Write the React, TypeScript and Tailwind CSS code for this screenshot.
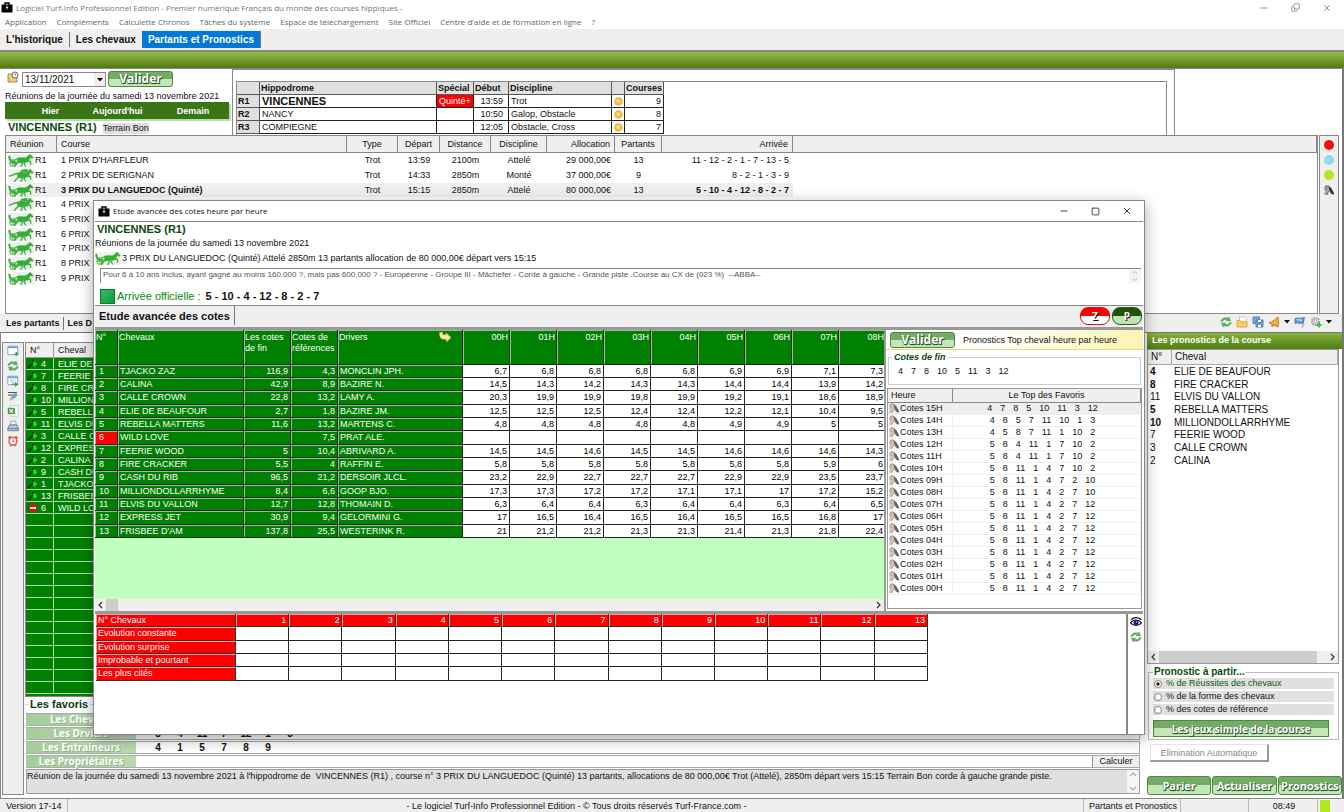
import type { ReactNode } from "react";
import clsx from "clsx";
import { Copy, Minus, Square, X } from "lucide-react";

const MENU = ["Application", "Compléments", "Calculette Chronos", "Tâches du système", "Espace de téléchargement", "Site Officiel", "Centre d'aide et de formation en ligne", "?"];

const MEETINGS = [
  { id: "R1", name: "VINCENNES", special: "Quinté+", start: "13:59", discipline: "Trot", races: 9 },
  { id: "R2", name: "NANCY", special: "", start: "10:50", discipline: "Galop, Obstacle", races: 8 },
  { id: "R3", name: "COMPIEGNE", special: "", start: "12:05", discipline: "Obstacle, Cross", races: 7 },
];

interface Race { name: string; ridden?: boolean; start?: string; distance?: string; kind?: string; purse?: string; runners?: number; finish?: string }

const RACES: Race[] = [
  { name: "1 PRIX D'HARFLEUR", start: "13:59", distance: "2100m", kind: "Attelé", purse: "29 000,00€", runners: 13, finish: "11 - 12 - 2 - 1 - 7 - 13 - 5" },
  { name: "2 PRIX DE SERIGNAN", ridden: true, start: "14:33", distance: "2850m", kind: "Monté", purse: "37 000,00€", runners: 9, finish: "8 - 2 - 1 - 3 - 9" },
  { name: "3 PRIX DU LANGUEDOC (Quinté)", start: "15:15", distance: "2850m", kind: "Attelé", purse: "80 000,00€", runners: 13, finish: "5 - 10 - 4 - 12 - 8 - 2 - 7" },
  { name: "4 PRIX", ridden: true },
  { name: "5 PRIX" },
  { name: "6 PRIX" },
  { name: "7 PRIX" },
  { name: "8 PRIX" },
  { name: "9 PRIX" },
];

const STARTERS: [number, string][] = [
  [4, "ELIE DE BEAUFOUR"], [7, "FEERIE WOOD"], [8, "FIRE CRACKER"], [10, "MILLIONDOLLARRHYME"], [5, "REBELLA MATTERS"],
  [11, "ELVIS DU VALLON"], [3, "CALLE CROWN"], [12, "EXPRESS JET"], [2, "CALINA"], [9, "CASH DU RIB"],
  [1, "TJACKO ZAZ"], [13, "FRISBEE D'AM"], [6, "WILD LOVE"],
];

const HOURS = ["00H", "01H", "02H", "03H", "04H", "05H", "06H", "07H", "08H"];

// horse, closing odds, reference odds, driver, then one value per hour
const ODDS: [string, string, string, string, string][] = [
  ["TJACKO ZAZ", "116,9", "4,3", "MONCLIN JPH.", "6,7 6,8 6,8 6,8 6,8 6,9 6,9 7,1 7,3"],
  ["CALINA", "42,9", "8,9", "BAZIRE N.", "14,5 14,3 14,2 14,3 14,3 14,4 14,4 13,9 14,2"],
  ["CALLE CROWN", "22,8", "13,2", "LAMY A.", "20,3 19,9 19,9 19,8 19,9 19,2 19,1 18,6 18,9"],
  ["ELIE DE BEAUFOUR", "2,7", "1,8", "BAZIRE JM.", "12,5 12,5 12,5 12,4 12,4 12,2 12,1 10,4 9,5"],
  ["REBELLA MATTERS", "11,6", "13,2", "MARTENS C.", "4,8 4,8 4,8 4,8 4,8 4,9 4,9 5 5"],
  ["WILD LOVE", "", "7,5", "PRAT ALE.", ""],
  ["FEERIE WOOD", "5", "10,4", "ABRIVARD A.", "14,5 14,5 14,6 14,5 14,5 14,6 14,6 14,6 14,3"],
  ["FIRE CRACKER", "5,5", "4", "RAFFIN E.", "5,8 5,8 5,8 5,8 5,8 5,8 5,8 5,9 6"],
  ["CASH DU RIB", "96,5", "21,2", "DERSOIR JLCL.", "23,2 22,9 22,7 22,7 22,7 22,9 22,9 23,5 23,7"],
  ["MILLIONDOLLARRHYME", "8,4", "6,6", "GOOP BJO.", "17,3 17,3 17,2 17,2 17,1 17,1 17 17,2 15,2"],
  ["ELVIS DU VALLON", "12,7", "12,8", "THOMAIN D.", "6,3 6,4 6,4 6,3 6,4 6,4 6,3 6,4 6,5"],
  ["EXPRESS JET", "30,9", "9,4", "GELORMINI G.", "17 16,5 16,4 16,5 16,4 16,5 16,5 16,8 17"],
  ["FRISBEE D'AM", "137,8", "25,5", "WESTERINK R.", "21 21,2 21,2 21,3 21,3 21,4 21,3 21,8 22,4"],
];

const TOP: [string, string][] = [
  ["15H", "4 7 8 5 10 11 3 12"],
  ["14H", "4 8 5 7 11 10 1 3"],
  ["13H", "4 5 8 7 11 1 10 2"],
  ["12H", "5 8 4 11 1 7 10 2"],
  ["11H", "5 8 4 11 1 7 10 2"],
  ["10H", "5 8 11 1 4 7 10 2"],
  ["09H", "5 8 11 1 4 7 2 10"],
  ["08H", "5 8 11 1 4 2 7 10"],
  ["07H", "5 8 11 1 4 2 7 12"],
  ["06H", "5 8 11 1 4 2 7 12"],
  ["05H", "5 8 11 1 4 2 7 12"],
  ["04H", "5 8 11 1 4 2 7 12"],
  ["03H", "5 8 11 1 4 2 7 12"],
  ["02H", "5 8 11 1 4 2 7 12"],
  ["01H", "5 8 11 1 4 2 7 12"],
  ["00H", "5 8 11 1 4 2 7 12"],
];

const PICKS: [number, string, boolean][] = [
  [4, "ELIE DE BEAUFOUR", true], [8, "FIRE CRACKER", true], [11, "ELVIS DU VALLON", false], [5, "REBELLA MATTERS", true],
  [10, "MILLIONDOLLARRHYME", true], [7, "FEERIE WOOD", false], [3, "CALLE CROWN", false], [2, "CALINA", false],
];

const FAVOURITES: [string, string][] = [
  ["Les Chevaux", ""],
  ["Les Drviers", "8 4 11 7 12 1 3"],
  ["Les Entraineurs", "4 1 5 7 8 9"],
  ["Les Propriétaires", ""],
];

const TRENDS = ["Evolution constante", "Evolution surprise", "Improbable et pourtant", "Les plus cités"];

/* ---------- icons ---------- */

function Briefcase() {
  return (
    <svg viewBox="0 0 12 11" className="h-[11px] w-3 shrink-0" aria-hidden="true">
      <path d="M4 3V1h4v2" fill="none" stroke="#000" strokeWidth="1.400" />
      <path d="M.5 2.500h11v8H.5z" fill="#000" />
      <path d="M6 3.500v4M4.800 5.500h2.400" stroke="#ddd" strokeWidth=".9" />
    </svg>
  );
}

function Horse({ ridden = false }: { ridden?: boolean }) {
  return (
    <svg viewBox="0 0 52 26" className="h-[13px] w-[26px] shrink-0 bg-[#f0f0f0]" fill="none" stroke="#35b035" strokeLinecap="round" strokeLinejoin="round" aria-hidden="true">
      <path d="M20 8c4-2 11 0 16-1l6-5 3-2 1 2.500 5 4.500-2 2-4.500-1.500c-1.500 4-3.500 7.500-6.500 9-5 1-9 0-13 1.500l-4-.5c-3-3-3.500-7.500-1-9.500z" fill="#35b035" strokeWidth=".5" />
      <path d="M22 15l-5 5-4 5M25 15l4 4-3 6M37 14l8 1 .5 5.500M35 15l-3 4 3 5" strokeWidth="2.600" />
      {ridden
        ? (
          <>
            <path d="M20 9c-6-1-8 4-17 5" strokeWidth="3" />
            <path d="M25 8l3-5 6-1 3 3M30 7l5-3" strokeWidth="3.400" />
            <circle cx="37" cy="1.800" r="1.600" fill="#35b035" />
          </>
        )
        : (
          <>
            <circle cx="9" cy="19" r="5.500" strokeWidth="1.800" />
            <path d="M9 13.500v11M3.500 19h11M4 15.500l10 7" strokeWidth=".9" />
            <path d="M9 18l12-3M20 9c-3 0-4 3-7 5" strokeWidth="2" />
            <path d="M3 9l3 6 7 .5 3 3" strokeWidth="3.600" />
            <path d="M5 11l7 1 9-3" strokeWidth="1.600" />
            <circle cx="2.800" cy="6" r="1.800" fill="#35b035" />
          </>
        )}
    </svg>
  );
}

function Sun() {
  return (
    <svg viewBox="0 0 9 9" className="mx-auto h-[9px] w-[9px]" aria-hidden="true">
      <circle cx="4.500" cy="4.500" r="3.700" fill="#f5c644" stroke="#e0a62c" strokeWidth="1.200" strokeDasharray="1 .6" />
      <circle cx="4" cy="4" r="1.600" fill="#fde08a" />
    </svg>
  );
}

function Refresh() {
  return (
    <svg viewBox="0 0 12 12" className="h-3 w-3" fill="#5cb85c" stroke="#3a8a3a" strokeWidth=".4" aria-hidden="true">
      <path d="M.8 5.500C1.500 2.500 4.500 1 8 2.200L9 1l1.500 4-4.300-.2 1-1.100C5 3 3.200 3.700 2.600 5.300z" />
      <path d="M11.200 6.500c-.7 3-3.700 4.500-7.200 3.300L3 11 1.500 7l4.300.2-1 1.100c2.200.7 4 0 4.600-1.600z" />
    </svg>
  );
}

function HorseHead({ muted = false }: { muted?: boolean }) {
  return (
    <svg viewBox="0 0 12 12" className="h-[11px] w-[12px] shrink-0" aria-hidden="true">
      <path d="M.5 3 2.500.8 6 1l2.500 3 3 4.500-1 2L7.500 9 5.800 7 4.800 8.500 3.500 11H.5L1.500 7z" fill={muted ? "#cdc3b8" : "#a8a8a8"} />
      <path d="M5.800 1 8.500 3.500l3 5.500-.8 1.500-2-1L6.500 6 6 4z" fill={muted ? "#6e6054" : "#333"} />
      <path d="M1 2.500 3 1l3 .3M1.800 5.500l2-2M3.500 11l2-4" fill="none" stroke={muted ? "#8d7f72" : "#333"} strokeWidth=".8" />
    </svg>
  );
}

// "table" sheet icons of the left toolbar share the same frame
function Sheet({ children }: { children?: ReactNode }) {
  return (
    <svg viewBox="0 0 12 12" className="h-3 w-3" aria-hidden="true">
      <rect x=".8" y="1.200" width="10" height="8.500" rx=".6" fill="#fff" stroke="#7fa6d6" />
      <path d="M1 2.400h9.600" stroke="#6d9bd4" strokeWidth="1.600" />
      {children}
    </svg>
  );
}

function Printer() {
  return (
    <svg viewBox="0 0 12 12" className="h-3 w-3" aria-hidden="true">
      <path d="M3 5 4 1h4.500L9.500 5z" fill="#e9f1fb" stroke="#7b8fab" strokeWidth=".7" />
      <path d="M.8 8.500 2.500 5h7.500l1.300 3.500v2.200H.8z" fill="#b8c9e2" stroke="#566b8a" strokeWidth=".8" />
      <path d="M1 8.500h10" stroke="#566b8a" strokeWidth=".8" />
    </svg>
  );
}

function Flag({ withdrawn = false }: { withdrawn?: boolean }) {
  if (withdrawn) {
    return (
      <svg viewBox="0 0 12 10" className="h-[10px] w-3" aria-hidden="true">
        <circle cx="6" cy="5" r="4.200" fill="#e80f0f" />
        <path d="M3 5h6" stroke="#fff" strokeWidth="1.800" />
      </svg>
    );
  }
  return (
    <svg viewBox="0 0 12 10" className="h-[10px] w-3" aria-hidden="true">
      <path d="M.8 9.200 6 3.800M5.500 1l5 6" stroke="#021a02" strokeWidth="1.200" />
      <path d="M6 3.500l1.800-2L9 4l1.600.8-1.400 2.400-2.800.2z" fill="#25d425" />
    </svg>
  );
}

function Excel() {
  return (
    <svg viewBox="0 0 12 12" className="h-3 w-3" aria-hidden="true">
      <rect x="3" y=".8" width="8" height="10.400" fill="#fff" stroke="#b5c4ae" strokeWidth=".7" />
      <rect x=".8" y="2.800" width="7" height="6.200" fill="#4f9a4a" />
      <path d="M2.500 4.200l3.500 3.400M6 4.200 2.500 7.600" stroke="#fff" strokeWidth="1.100" />
    </svg>
  );
}

function Brush() {
  return (
    <svg viewBox="0 0 12 12" className="h-3 w-3" aria-hidden="true">
      <path d="M1 2.500h9M1 5h6" stroke="#555" strokeWidth="1" />
      <path d="M3 8.500 8 2.800l3 1.600-3.500 4z" fill="#6fa3d8" />
      <path d="M2.500 11 3 8l3.500 1.200z" fill="#f0a53a" />
    </svg>
  );
}

function AlarmClock() {
  return (
    <svg viewBox="0 0 12 12" className="h-3 w-3" aria-hidden="true">
      <path d="M1.500 3.500 3.600 1.400M10.500 3.500 8.400 1.400M3 10.800l1-1M9 10.800l-1-1" stroke="#e0574b" strokeWidth="1.900" />
      <circle cx="6" cy="6.300" r="3.900" fill="#fff" stroke="#ea6a5c" strokeWidth="1.800" />
      <path d="M6 4.200v2.300h1.800" fill="none" stroke="#555" strokeWidth=".8" />
    </svg>
  );
}

function Eye() {
  return (
    <svg viewBox="0 0 12 12" className="h-3 w-3" aria-hidden="true">
      <path d="M.5 6.800C3 3.200 8.500 3 11.500 6.800 8.500 10.300 3.500 10.300.5 6.800z" fill="#fff" stroke="#111" strokeWidth="1.200" />
      <circle cx="6" cy="6.600" r="2.500" fill="#16168c" />
      <circle cx="6.500" cy="5.900" r=".7" fill="#cfd6ff" />
      <path d="M1 3.500C4 .8 8.500 1 11.300 3.800" fill="none" stroke="#111" strokeWidth="1.300" />
    </svg>
  );
}

function Folder() {
  return (
    <svg viewBox="0 0 12 12" className="h-3 w-3" aria-hidden="true">
      <path d="M3.500 1h5L10 2.500V8H3.500z" fill="#fff" stroke="#aaa" strokeWidth=".6" />
      <path d="M1 4.500h3l1 1.300h6v5.200H1z" fill="#f8cf6a" stroke="#d99a2b" strokeWidth=".8" />
    </svg>
  );
}

function SaveAll() {
  return (
    <svg viewBox="0 0 12 12" className="h-3 w-3" fill="#7fa9df" stroke="#3e6db0" strokeWidth=".8" aria-hidden="true">
      <path d="M1 1h6.500v6.500H1z" />
      <path d="M4 4h7v7H4z" />
      <path d="M5.500 4v2.500h4V4M5.500 11V8.300h4V11" fill="#fff" />
    </svg>
  );
}

function Bell() {
  return (
    <svg viewBox="0 0 12 12" className="h-3 w-3" aria-hidden="true">
      <path d="M9.800.8c1 3 .8 6.500.2 10.200L1 6.800C4.500 5.500 7.500 4 9.800.8z" fill="#f2b03f" stroke="#a8701a" strokeWidth=".8" />
      <path d="M3.500 8.200 3 10.500l2 .3.800-1.500" fill="#c98b25" />
    </svg>
  );
}

function BlueFlag() {
  return (
    <svg viewBox="0 0 12 12" className="h-3 w-3" aria-hidden="true">
      <path d="M10.500 1 8.500 11.500" stroke="#c8843a" strokeWidth="1" />
      <path d="M1 2.500c3-1.300 5 .8 9-1L9 7C6 8.300 4 6 1 7.500z" fill="#5b9fe0" stroke="#3272b5" strokeWidth=".7" />
      <path d="M2.500 3.800c2-.4 3.500.7 5.500.2" stroke="#cfe5fb" strokeWidth="1.200" fill="none" />
    </svg>
  );
}

function Gear() {
  return (
    <svg viewBox="0 0 12 12" className="h-3 w-3" aria-hidden="true">
      <circle cx="5.500" cy="5.500" r="3.600" fill="#ddd" stroke="#999" strokeWidth="1.900" strokeDasharray="1.500 .9" />
      <circle cx="5.500" cy="5.500" r="1.400" fill="#fff" stroke="#888" strokeWidth=".6" />
      <path d="M9 6.500v5M6.500 9h5" stroke="#4fae45" strokeWidth="1.800" />
    </svg>
  );
}

function Caret() {
  return (
    <svg viewBox="0 0 6 4" className="h-1 w-[6px]" aria-hidden="true"><path d="M0 0h6L3 3.500z" fill="#111" /></svg>
  );
}

function Chevron({ to }: { to: "left" | "right" | "up" | "down" }) {
  const d = { left: "M5 1 2 4l3 3", right: "M3 1l3 3-3 3", up: "M1 5l3-3 3 3", down: "M1 3l3 3 3-3" }[to];
  return (
    <svg viewBox="0 0 8 8" className="h-2 w-2" aria-hidden="true">
      <path d={d} fill="none" stroke={to === "up" || to === "down" ? "#aaa" : "#333"} strokeWidth="1.200" />
    </svg>
  );
}

function IconButton({ label, children }: { label: string; children: ReactNode }) {
  return <button type="button" aria-label={label} className="flex shrink-0 items-center justify-center">{children}</button>;
}

/* ---------- shared controls ---------- */

function GreenButton({ children, className = "" }: { children: ReactNode; className?: string }) {
  return (
    <button
      type="button"
      className={clsx(
        "flex items-center justify-center border border-[#4a8a3c] bg-linear-to-b from-[#74ab66] from-50% to-[#c4e6b8] to-50% font-['Open_Sans',sans-serif] font-bold whitespace-nowrap text-white [text-shadow:1px_1px_0_#24501a,0_1px_1px_#24501a]",
        className,
      )}
    >
      {children}
    </button>
  );
}

function HorizontalBar({ thumb }: { thumb: string }) {
  return (
    <div className="flex h-3 shrink-0 items-center bg-[#efefef] px-[2px]">
      <Chevron to="left" />
      <div className="flex h-full flex-1 px-[1px]"><div className={clsx("h-full bg-[#cdcdcd]", thumb)} /></div>
      <Chevron to="right" />
    </div>
  );
}

function VerticalArrows() {
  return (
    <div className="flex w-3 shrink-0 flex-col items-center justify-between bg-[#f5f5f5] py-[1px]">
      <Chevron to="up" />
      <Chevron to="down" />
    </div>
  );
}

/* ---------- main window ---------- */

function MeetingPicker() {
  return (
    <div className="w-[232px] shrink-0 pl-[5px]">
      <div className="flex h-[19px] items-center">
        <svg viewBox="0 0 12 12" className="mb-[4px] ml-[2px] h-3 w-3" aria-hidden="true">
          <path d="M1 3h4l1 1h4v7H1z" fill="#e9cd7c" stroke="#8c7434" strokeWidth=".8" />
          <circle cx="8" cy="4" r="3" fill="#fff" stroke="#444" strokeWidth=".8" />
          <path d="M8 2.300V4h1.300" fill="none" stroke="#444" strokeWidth=".7" />
        </svg>
        <div className="relative ml-[3px] mt-[2px] h-[15px] w-[84px] border border-[#888]">
          <select aria-label="Date" className="h-full w-full appearance-none bg-white pl-[2px] text-[10px] leading-[13px]">
            <option>13/11/2021</option>
          </select>
          <span className="pointer-events-none absolute inset-y-0 right-0 flex w-[11px] items-center justify-center bg-[#efefef]"><Caret /></span>
        </div>
        <GreenButton className="ml-[2px] h-[16px] w-[65px] rounded-[3px] text-[12px] leading-[14px]">Valider</GreenButton>
      </div>
      <p className="h-[14px] pt-[2px] text-[9px] leading-[12px] whitespace-nowrap">Réunions de la journée du samedi 13 novembre 2021</p>
      <div className="flex h-[17px] w-[224px] items-center bg-[#3a7518] text-[9px] leading-[12px] font-bold whitespace-nowrap text-white shadow-[2px_2px_0_#b9dcae]">
        <button type="button" className="w-[91px]">Hier</button>
        <button type="button" className="w-[43px]"><span className="-mx-1">Aujourd'hui</span></button>
        <button type="button" className="flex-1 pl-[18px]">Demain</button>
      </div>
      <div className="flex h-[15px] items-end gap-[6px] pl-[3px]">
        <h1 className="text-[11px] leading-[13px] font-bold text-[#0b4a0b]">VINCENNES (R1)</h1>
        <span className="bg-[#e0e0e0] text-[9px] leading-[11px]">Terrain Bon</span>
      </div>
    </div>
  );
}

function MeetingTable() {
  return (
    <div className="w-[943px] border-x border-t border-[#888] pt-[11px] pr-[7px] pl-[3px]">
      <div className="h-[54px] border border-b-0 border-[#888]">
        <table className="w-[427px] table-fixed border-separate border-spacing-0 text-left text-[9px] leading-[11px] [&_td]:h-[13px] [&_td]:border-r [&_td]:border-b [&_td]:border-[#222] [&_td]:px-[2px] [&_th]:h-[13px] [&_th]:border-r [&_th]:border-b [&_th]:border-[#555] [&_th]:bg-[#e0e0e0] [&_th]:px-[1px]">
          <colgroup>
            <col className="w-[23px]" /><col className="w-[177px]" /><col className="w-[37px]" /><col className="w-[35px]" />
            <col className="w-[103px]" /><col className="w-[13px]" /><col />
          </colgroup>
          <thead>
            <tr><th /><th>Hippodrome</th><th>Spécial</th><th>Début</th><th>Discipline</th><th /><th className="text-center">Courses</th></tr>
          </thead>
          <tbody>
            {MEETINGS.map((m) => (
              <tr key={m.id}>
                <th scope="row">{m.id}</th>
                <td className={m.id === "R1" ? "text-[11px] font-bold" : ""}>{m.name}</td>
                <td className={m.special ? "bg-[#fe0000] text-white" : ""}>{m.special}</td>
                <td className="pr-[5px]! text-right">{m.start}</td>
                <td>{m.discipline}</td>
                <td className="px-0!"><Sun /></td>
                <td className="text-right">{m.races}</td>
              </tr>
            ))}
          </tbody>
        </table>
      </div>
    </div>
  );
}

function RaceList() {
  return (
    <div className="flex h-[179px] shrink-0 gap-[1px] border-r-2 border-[#777] pr-[3px] pl-[5px]">
      <div className="flex-1 overflow-hidden border border-[#888]">
        <table className="w-full table-fixed border-separate border-spacing-0 text-center text-[9px] leading-[11px] whitespace-nowrap [&_th]:h-[17px] [&_th]:border-r [&_th]:border-b [&_th]:border-[#888] [&_th]:bg-[#efefef] [&_th]:px-1 [&_th]:font-normal [&_td]:px-1 [&_td]:py-0">
          <colgroup>
            <col className="w-[51px]" /><col className="w-[290px]" /><col className="w-[51px]" /><col className="w-[42px]" /><col className="w-[51px]" />
            <col className="w-[56px]" /><col className="w-[68px]" /><col className="w-[47px]" /><col className="w-[131px]" /><col />
          </colgroup>
          <thead>
            <tr>
              <th className="text-left">Réunion</th><th className="text-left">Course</th><th>Type</th><th>Départ</th><th>Distance</th>
              <th>Discipline</th><th className="text-right">Allocation</th><th>Partants</th><th className="text-right">Arrivée</th><th />
            </tr>
          </thead>
          <tbody className="[&>tr]:h-[15px] [&>tr:nth-child(3n)]:h-[14px]">
            {RACES.map((r, i) => (
              <tr key={r.name} className={clsx(i === 2 && "[&>td:not(:last-child)]:bg-[#efefef]")}>
                <td className="pl-[2px]! text-left"><span className="flex items-center gap-[1px]"><Horse ridden={r.ridden} />R1</span></td>
                <td className={clsx("pl-[4px]! text-left", i === 2 && "font-bold")}>{r.name}</td>
                <td>{r.start && "Trot"}</td>
                <td>{r.start}</td>
                <td>{r.distance}</td>
                <td>{r.kind}</td>
                <td className="text-right">{r.purse}</td>
                <td>{r.runners}</td>
                <td className={clsx("text-right", i === 2 && "font-bold")}>{r.finish}</td>
                <td />
              </tr>
            ))}
          </tbody>
        </table>
      </div>
      <div className="flex w-[20px] flex-col items-center gap-[5px] border border-[#888] bg-[#efefef] pt-[4px]">
        <button type="button" aria-label="Rouge" className="h-[10px] w-[10px] rounded-full bg-[#f01010]" />
        <button type="button" aria-label="Bleu" className="h-[10px] w-[10px] rounded-full bg-[#98d8ea]" />
        <button type="button" aria-label="Vert" className="h-[10px] w-[10px] rounded-full bg-[#b2e61d]" />
        <IconButton label="Cheval"><HorseHead /></IconButton>
      </div>
    </div>
  );
}

function StarterList() {
  return (
    <div className="h-[355px] overflow-hidden border border-[#888] bg-[#008000]">
      <table className="w-full table-fixed border-separate border-spacing-0 text-[9px] leading-[10px]">
        <colgroup><col className="w-[28px]" /><col className="w-[40px]" /><col /></colgroup>
        <thead>
          <tr className="text-left [&>th]:h-[15px] [&>th]:border-r [&>th]:border-b [&>th]:border-[#999] [&>th]:bg-[#efefef] [&>th]:px-1 [&>th]:font-normal">
            <th>N°</th><th>Cheval</th><th />
          </tr>
        </thead>
        <tbody className="text-white [&_td]:h-3 [&_td]:border-r [&_td]:border-b [&_td]:border-[#b5d6b5] [&_td]:p-0">
          {Array.from({ length: 28 }, (_, i) => {
            const starter = STARTERS[i];
            return (
              <tr key={i}>
                <td>{starter && <span className="flex h-[11px] items-center gap-[2px] pl-[1px]"><Flag withdrawn={starter[0] === 6} />{starter[0]}</span>}</td>
                <td className="overflow-hidden pl-[4px]! whitespace-nowrap">{starter?.[1]}</td>
                <td />
              </tr>
            );
          })}
        </tbody>
      </table>
    </div>
  );
}

function Favourites() {
  return (
    <fieldset className="border-t border-[#ccc]">
      <legend className="ml-[3px] px-[2px] text-[11px] leading-[15px] font-bold text-[#0b3a0b]">Les favoris</legend>
      <div className="flex flex-col gap-[1px] pt-[1px] pl-[1px]">
        {FAVOURITES.map(([label, numbers]) => (
          <div key={label} className="flex h-[13px] items-stretch border-y border-r border-[#aaa] bg-white">
            <button type="button" className="w-[110px] shrink-0 bg-linear-to-r from-[#a5cc9b] to-[#b9dcae] font-['Open_Sans',sans-serif] text-[10px] leading-[11px] font-bold text-white [text-shadow:1px_1px_0_#8fb585]">{label}</button>
            <div className="flex flex-1 pl-[11px] text-[10px] leading-[12px] font-bold">
              {numbers.split(" ").map((n, i) => <span key={i} className="w-[22px] text-center">{n}</span>)}
            </div>
            {label === "Les Propriétaires" && (
              <button type="button" className="w-[47px] border-l border-[#999] bg-[#efefef] text-[9px] leading-[11px]">Calculer</button>
            )}
          </div>
        ))}
      </div>
    </fieldset>
  );
}

function PicksPanel() {
  return (
    <aside className="flex w-[197px] shrink-0 flex-col border-r-2 border-[#777]">
      <h2 className="h-[16px] bg-linear-to-b from-[#86b33a] to-[#4f7d12] pl-[5px] text-[9px] leading-[14px] font-bold text-white">Les pronostics de la course</h2>
      <div className="mr-[3px] flex flex-1 flex-col border border-[#999]">
        <table className="w-full table-fixed border-separate border-spacing-0 text-left text-[10px] leading-[12px]">
          <colgroup><col className="w-[24px]" /><col /></colgroup>
          <thead>
            <tr className="[&>th]:h-[15px] [&>th]:border-r [&>th]:border-b [&>th]:border-[#aaa] [&>th]:bg-[#efefef] [&>th]:px-[3px] [&>th]:font-normal"><th>N°</th><th>Cheval</th></tr>
          </thead>
          <tbody className="[&>tr]:h-[13px] [&>tr:nth-child(3n)]:h-[12px]">
            {PICKS.map(([n, name, strong]) => (
              <tr key={n}>
                <td className={clsx("py-0 pr-0 pl-[2px]", strong && "font-bold")}>{n}</td>
                <td className="py-0 pr-0 pl-[2px]">{name}</td>
              </tr>
            ))}
          </tbody>
        </table>
        <div className="flex-1" />
        <HorizontalBar thumb="w-[94%]" />
      </div>
      <fieldset className="mt-[2px] mr-[3px] ml-[1px] border border-[#bbb] px-[4px] pb-[2px]">
        <legend className="px-[1px] text-[10px] leading-[12px] font-bold text-[#0b4a0b]">Pronostic à partir...</legend>
        <div className="flex flex-col gap-[2px]">
          {["% de Réussites des chevaux", "% de la forme des chevaux", "% des cotes de référence"].map((label, i) => (
            <label key={label} className={clsx("flex h-[11px] items-center gap-1 bg-[#e0e0e0] pl-[1px] text-[9px] leading-[11px]", i === 0 && "text-[#0b5a0b]")}>
              <input type="radio" name="basis" defaultChecked={i === 0} className="h-2 w-2 appearance-none rounded-full border border-[#888] bg-white checked:bg-[radial-gradient(#111_35%,#fff_40%)]" />
              {label}
            </label>
          ))}
        </div>
        <GreenButton className="mt-[5px] h-[17px] w-[176px] text-[10px] leading-[14px]">Les jeux simple de la course</GreenButton>
      </fieldset>
      <button type="button" className="mt-[4px] ml-[3px] h-[18px] w-[119px] border border-r-2 border-b-2 border-[#e5e5e5] border-r-[#999] border-b-[#999] bg-white text-[9px] leading-[12px] text-[#888]">Elimination Automatique</button>
      <div className="mt-[14px] mb-[3px] flex gap-[1px]">
        {["Parier", "Actualiser", "Pronostics"].map((label) => (
          <GreenButton key={label} className="h-[19px] flex-1 rounded-[3px] text-[11px] leading-[16px]">{label}</GreenButton>
        ))}
      </div>
    </aside>
  );
}

/* ---------- odds window ---------- */

function OddsTable() {
  return (
    <div className="flex min-w-0 flex-1 flex-col overflow-hidden bg-[#c0ffc0]">
      <div className="flex-1 overflow-hidden">
        <table className="w-[791px] table-fixed border-separate border-spacing-0 text-[9px] leading-[11px] whitespace-nowrap text-white [&_td]:border-r [&_td]:border-b [&_td]:border-[#222] [&_td]:px-[2px] [&_td]:py-0 [&_th]:border-r [&_th]:border-b [&_th]:border-[#222] [&_th]:bg-[#008000] [&_th]:px-[1px] [&_th]:pt-[2px] [&_th]:align-top [&_th]:font-normal [&_th]:shadow-[inset_1px_1px_0_#8fc48f]">
          <colgroup>
            <col className="w-[23px]" /><col className="w-[126px]" /><col className="w-[47px]" /><col className="w-[47px]" /><col className="w-[125px]" />
            {HOURS.map((h) => <col key={h} />)}
          </colgroup>
          <thead>
            <tr className="h-[35px] text-left">
              <th>N°</th>
              <th>Chevaux</th>
              <th className="whitespace-normal">Les cotes de fin</th>
              <th className="whitespace-normal">Cotes de références</th>
              <th>
                <span className="flex items-start justify-between pr-[10px]">
                  Drivers
                  <svg viewBox="0 0 12 10" className="h-[10px] w-3" aria-hidden="true">
                    <path d="M.5.500 3.500 0v2.500L7 3V.8L12 5.500 7.500 10V7.500L3 7C1 6 .5 4 .5.500z" fill="#ffe9a0" stroke="#d9a93a" strokeWidth=".6" />
                  </svg>
                </span>
              </th>
              {HOURS.map((h) => <th key={h} className="text-right">{h}</th>)}
            </tr>
          </thead>
          <tbody className="[&>tr]:h-[13px] [&>tr:nth-child(3n)]:h-[14px]">
            {ODDS.map(([name, last, ref, driver, hours], i) => {
              const values = hours.split(" ");
              return (
                <tr key={name} className="[&>td:nth-child(-n+5)]:bg-[#008000] [&>td:nth-child(-n+5)]:shadow-[inset_1px_1px_0_#8fc48f]">
                  <td className={clsx("pl-1!", i === 5 && "bg-[#fe0000]!")}>{i + 1}</td>
                  <td>{name}</td>
                  <td className="text-right">{last}</td>
                  <td className="text-right">{ref}</td>
                  <td>{driver}</td>
                  {HOURS.map((h, k) => <td key={h} className="bg-white text-right text-black">{values[k]}</td>)}
                </tr>
              );
            })}
          </tbody>
        </table>
      </div>
      <HorizontalBar thumb="w-3" />
    </div>
  );
}

function Numbers({ list, className = "" }: { list: string; className?: string }) {
  return (
    <span className={clsx("flex gap-2", className)}>
      {list.split(" ").map((n, i) => <span key={i}>{n}</span>)}
    </span>
  );
}

function TopPanel() {
  return (
    <div className="flex w-[259px] shrink-0 flex-col border-l-2 border-[#999] bg-white">
      <div className="flex h-[20px] items-center gap-[8px] border-b border-[#f0d870] bg-linear-to-r from-white from-40% to-[#fdf3b0] pl-[4px]">
        <GreenButton className="h-[16px] w-[65px] rounded-[3px] text-[12px] leading-[14px]">Valider</GreenButton>
        <span className="text-[9px] leading-[12px]">Pronostics Top cheval heure par heure</span>
      </div>
      <fieldset className="mx-[2px] mt-[1px] h-[34px] border border-[#ccc]">
        <legend className="ml-[3px] px-[2px] text-[9px] leading-[12px] font-bold text-[#0b4a0b] italic">Cotes de fin</legend>
        <Numbers list="4 7 8 10 5 11 3 12" className="pt-[2px] pl-[9px] text-[9px] leading-[12px]" />
      </fieldset>
      <div className="mx-[1px] mt-[3px] mb-[2px] flex-1 border border-[#999]">
        <table className="w-full table-fixed border-separate border-spacing-0 text-[9px] leading-[11px]">
          <colgroup><col className="w-[65px]" /><col /></colgroup>
          <thead>
            <tr className="[&>th]:h-[14px] [&>th]:border-r [&>th]:border-b [&>th]:border-[#888] [&>th]:bg-[#efefef] [&>th]:px-[3px] [&>th]:font-normal">
              <th className="text-left">Heure</th><th>Le Top des Favoris</th>
            </tr>
          </thead>
          <tbody className="[&_td]:h-3 [&_td]:border-r [&_td]:border-b [&_td]:border-[#f0f0f0] [&_td]:p-0">
            {TOP.map(([hour, list], i) => (
              <tr key={hour} className={i === 0 ? "bg-[#efefef]" : ""}>
                <td><span className="flex h-[11px] items-center whitespace-nowrap"><HorseHead muted />Cotes {hour}</span></td>
                <td><Numbers list={list} className="justify-center pr-2" /></td>
              </tr>
            ))}
          </tbody>
        </table>
      </div>
    </div>
  );
}

function TrendTable() {
  return (
    <table className="w-[832px] table-fixed border-separate border-spacing-0 text-[9px] leading-[11px] text-white [&_td]:border-r [&_td]:border-b [&_td]:border-[#222] [&_td]:p-0 [&_th]:border-r [&_th]:border-b [&_th]:border-[#333] [&_th]:bg-[#fe0000] [&_th]:px-[2px] [&_th]:py-0 [&_th]:font-normal [&_th]:shadow-[inset_1px_1px_0_#ff9c9c]">
      <colgroup><col className="w-[140px]" />{ODDS.map(([name]) => <col key={name} />)}</colgroup>
      <thead>
        <tr className="h-[13px]"><th className="text-left">N° Chevaux</th>{ODDS.map(([name], i) => <th key={name} className="text-right">{i + 1}</th>)}</tr>
      </thead>
      <tbody className="[&>tr]:h-[13px] [&>tr:nth-child(3n+1)]:h-[14px]">
        {TRENDS.map((t) => (
          <tr key={t}><th scope="row" className="text-left">{t}</th>{ODDS.map(([name]) => <td key={name} className="bg-white" />)}</tr>
        ))}
      </tbody>
    </table>
  );
}

function OddsWindow() {
  return (
    <section className="absolute top-[200px] right-[199px] left-[93px] flex h-[535px] flex-col border border-[#888] bg-white px-[1px] shadow-[0_4px_14px_rgba(0,0,0,0.35)]">
      <header className="flex h-[20px] shrink-0 items-center gap-[3px] pl-[3px]">
        <Briefcase />
        <h2 className="flex-1 font-['Open_Sans',sans-serif] text-[8px] leading-[12px]">Etude avancée des cotes heure par heure</h2>
        <div className="flex gap-[22px] pr-[11px]">
          <IconButton label="Réduire"><Minus className="h-[10px] w-[10px]" /></IconButton>
          <IconButton label="Agrandir"><Square className="h-[9px] w-[9px]" /></IconButton>
          <IconButton label="Fermer"><X className="h-[10px] w-[10px]" /></IconButton>
        </div>
      </header>
      <div className="h-[85px] shrink-0 border-y border-[#888]">
        <h3 className="h-[15px] pl-[2px] text-[11px] leading-[14px] font-bold text-[#0b4a0b]">VINCENNES (R1)</h3>
        <p className="h-[14px] text-[9px] leading-[13px]">Réunions de la journée du samedi 13 novembre 2021</p>
        <p className="flex h-[14px] items-center gap-[1px] text-[9px] leading-[14px]"><Horse />3 PRIX DU LANGUEDOC (Quinté) Attelé 2850m 13 partants allocation de 80 000,00€ départ vers 15:15</p>
        <div className="mt-[3px] mr-[2px] ml-[5px] flex h-[15px] border-t border-l border-[#888]">
          <textarea
            readOnly
            aria-label="Conditions"
            className="h-full min-w-0 flex-1 resize-none overflow-hidden bg-white pl-[2px] text-[8px] leading-[12px] text-[#555]"
            defaultValue="Pour 6 à 10 ans inclus, ayant gagné au moins 160.000 ?, mais pas 600.000 ? - Européenne - Groupe III - Mâchefer - Corde à gauche - Grande piste .Course au CX de (023 %)  --ABBA--"
          />
          <VerticalArrows />
        </div>
        <div className="flex h-[21px] items-end gap-[2px] pl-[5px] text-[11px] leading-[15px]">
          <span className="h-[15px] w-[15px] border border-[#0b7a2c] bg-linear-to-br from-[#2fbf62] to-[#0a9a3c]" />
          <span className="text-[#0a8a0a]">Arrivée officielle :</span>
          <strong className="pl-[3px]">5 - 10 - 4 - 12 - 8 - 2 - 7</strong>
        </div>
      </div>
      <div className="flex h-[24px] shrink-0 justify-between border-b-3 border-[#999] bg-[#efefef]">
        <button type="button" className="h-[19px] border-r border-[#777] px-[4px] text-[11px] leading-[18px] font-bold">Etude avancée des cotes</button>
        <div className="flex gap-[2px] pt-[1px] pr-[1px]">
          <button type="button" className="h-[18px] w-[30px] rounded-[8px] border border-[#e01010] bg-linear-to-b from-[#fb0000] from-50% to-white to-50% font-['Open_Sans',sans-serif] text-[10px] leading-[16px] font-bold text-white [text-shadow:1px_1px_0_#111]">Z</button>
          <button type="button" className="h-[18px] w-[30px] rounded-[8px] border border-[#2d5a1c] bg-linear-to-b from-[#23520f] from-50% to-[#bfe3b2] to-50% font-['Open_Sans',sans-serif] text-[10px] leading-[16px] font-bold text-white [text-shadow:1px_1px_0_#111]">P</button>
        </div>
      </div>
      <div className="flex h-[281px] shrink-0">
        <OddsTable />
        <TopPanel />
      </div>
      <div className="flex flex-1 border-t-3 border-[#999]">
        <div className="min-w-0 flex-1 overflow-hidden pl-[1px]"><TrendTable /></div>
        <div className="flex w-[17px] flex-col items-center gap-[3px] border-l-2 border-[#888] pt-[2px]">
          <IconButton label="Afficher"><Eye /></IconButton>
          <IconButton label="Actualiser"><Refresh /></IconButton>
        </div>
      </div>
    </section>
  );
}

export default function App() {
  return (
    <div className="relative flex min-h-screen flex-col overflow-hidden bg-white font-['Liberation_Sans',Arial,sans-serif] text-[9px] leading-[12px] text-[#111]">
      <header className="flex h-[15px] items-center gap-[3px] pl-[1px] font-['Open_Sans',sans-serif] text-[8px] leading-[12px] text-[#777]">
        <Briefcase />
        <span className="flex-1">Logiciel Turf-Info Professionnel Edition - Premier numérique Français du monde des courses hippiques -</span>
        <div className="flex gap-[22px] pr-[12px]">
          <IconButton label="Réduire"><Minus className="h-[10px] w-[10px]" /></IconButton>
          <IconButton label="Restaurer"><Copy className="h-[9px] w-[9px] -scale-x-100 rotate-180" /></IconButton>
          <IconButton label="Fermer"><X className="h-[10px] w-[10px]" /></IconButton>
        </div>
      </header>
      <nav className="flex h-[14px] items-center gap-[10px] pl-[5px] font-['Open_Sans',sans-serif] text-[8px] leading-[12px] text-[#666]">
        {MENU.map((item) => <button key={item} type="button">{item}</button>)}
      </nav>
      <nav className="flex h-[23px] items-start border-b-2 border-[#888] bg-[#efefef] pt-[2px] text-[10px] leading-[16px] font-bold">
        <button type="button" className="mt-[1px] h-[15px] border-r border-[#777] px-[6px]">L'historique</button>
        <button type="button" className="mt-[1px] h-[15px] px-[6px]">Les chevaux</button>
        <button type="button" className="h-[17px] border-r border-[#777] bg-[#0078d7] px-[6px] leading-[15px] text-white">Partants et Pronostics</button>
      </nav>
      <div className="h-[17px] shrink-0 border-b border-[#888] bg-linear-to-b from-[#96bd4c] to-[#507a0c]" />

      <div className="flex h-[66px] shrink-0 border-r-2 border-[#777]">
        <MeetingPicker />
        <MeetingTable />
      </div>
      <RaceList />

      <div className="flex h-[19px] shrink-0 items-start justify-between border-r-2 border-b border-[#777] bg-[#efefef] pr-[10px] pl-[2px]">
        <div className="flex pt-[3px] text-[9px] leading-[13px] font-bold">
          <button type="button" className="border-r border-[#777] pr-[3px] pl-[4px]">Les partants</button>
          <button type="button" className="px-[4px]">Les D</button>
        </div>
        <div className="flex items-center gap-[4px] pt-[2px]">
          <IconButton label="Actualiser"><Refresh /></IconButton>
          <IconButton label="Ouvrir"><Folder /></IconButton>
          <IconButton label="Enregistrer"><SaveAll /></IconButton>
          <IconButton label="Alertes"><Bell /></IconButton>
          <Caret />
          <IconButton label="Drapeau"><BlueFlag /></IconButton>
          <IconButton label="Options"><Gear /></IconButton>
          <Caret />
        </div>
      </div>

      <main className="flex flex-1">
        <div className="flex min-w-0 flex-1 border-l border-[#888] pt-[9px] pl-[1px]">
          <div className="mb-[3px] flex w-[22px] shrink-0 flex-col items-center gap-[3px] border border-[#888] bg-[#efefef] pt-[2px]">
            <IconButton label="Nouveau"><Sheet><path d="M7.500 9h4M9.500 7v4" stroke="#3fa33f" strokeWidth="1.500" /></Sheet></IconButton>
            <IconButton label="Actualiser"><Refresh /></IconButton>
            <IconButton label="Exporter"><Sheet><path d="M3 5h6M3 7h4" stroke="#9bb8dd" /><path d="M5 8.500h3V6.500l3.500 3L8 12v-2H5z" fill="#46a546" /></Sheet></IconButton>
            <IconButton label="Modifier"><Brush /></IconButton>
            <IconButton label="Excel"><Excel /></IconButton>
            <IconButton label="Imprimer"><Printer /></IconButton>
            <IconButton label="Alarme"><AlarmClock /></IconButton>
          </div>
          <div className="flex min-w-0 flex-1 flex-col pr-[7px] pl-[1px]">
            <StarterList />
            <Favourites />
            <div className="mt-[1px] ml-[1px] flex h-[25px] border border-[#999]">
              <textarea
                readOnly
                aria-label="Résumé"
                className="h-full min-w-0 flex-1 resize-none overflow-hidden bg-[#e0e0e0] text-[9px] leading-[12px]"
                defaultValue="Réunion de la journée du samedi 13 novembre 2021 à l'hippodrome de  VINCENNES (R1) , course n° 3 PRIX DU LANGUEDOC (Quinté) 13 partants, allocations de 80 000,00€ Trot (Attelé), 2850m départ vers 15:15 Terrain Bon corde à gauche grande piste."
              />
              <VerticalArrows />
            </div>
          </div>
        </div>
        <PicksPanel />
      </main>

      <footer className="flex h-[14px] items-stretch gap-[2px] border-t border-[#888] bg-[#efefef] text-[9px] leading-[14px] [&>span]:border-r [&>span]:border-[#bbb]">
        <span className="w-[68px] pl-[6px]">Version 17-14</span>
        <span className="flex-1 text-center">- Le logiciel Turf-Info Professionnel Edition - © Tous droits réservés Turf-France.com -</span>
        <span className="w-[95px] text-center">Partants et Pronostics</span>
        <span className="w-[66px]" />
        <span className="w-[67px] text-center">08:49</span>
        <div className="mt-[1px] w-[10px] bg-[#b2e61d]" />
        <div className="w-[12px]" />
      </footer>

      <OddsWindow />
    </div>
  );
}
